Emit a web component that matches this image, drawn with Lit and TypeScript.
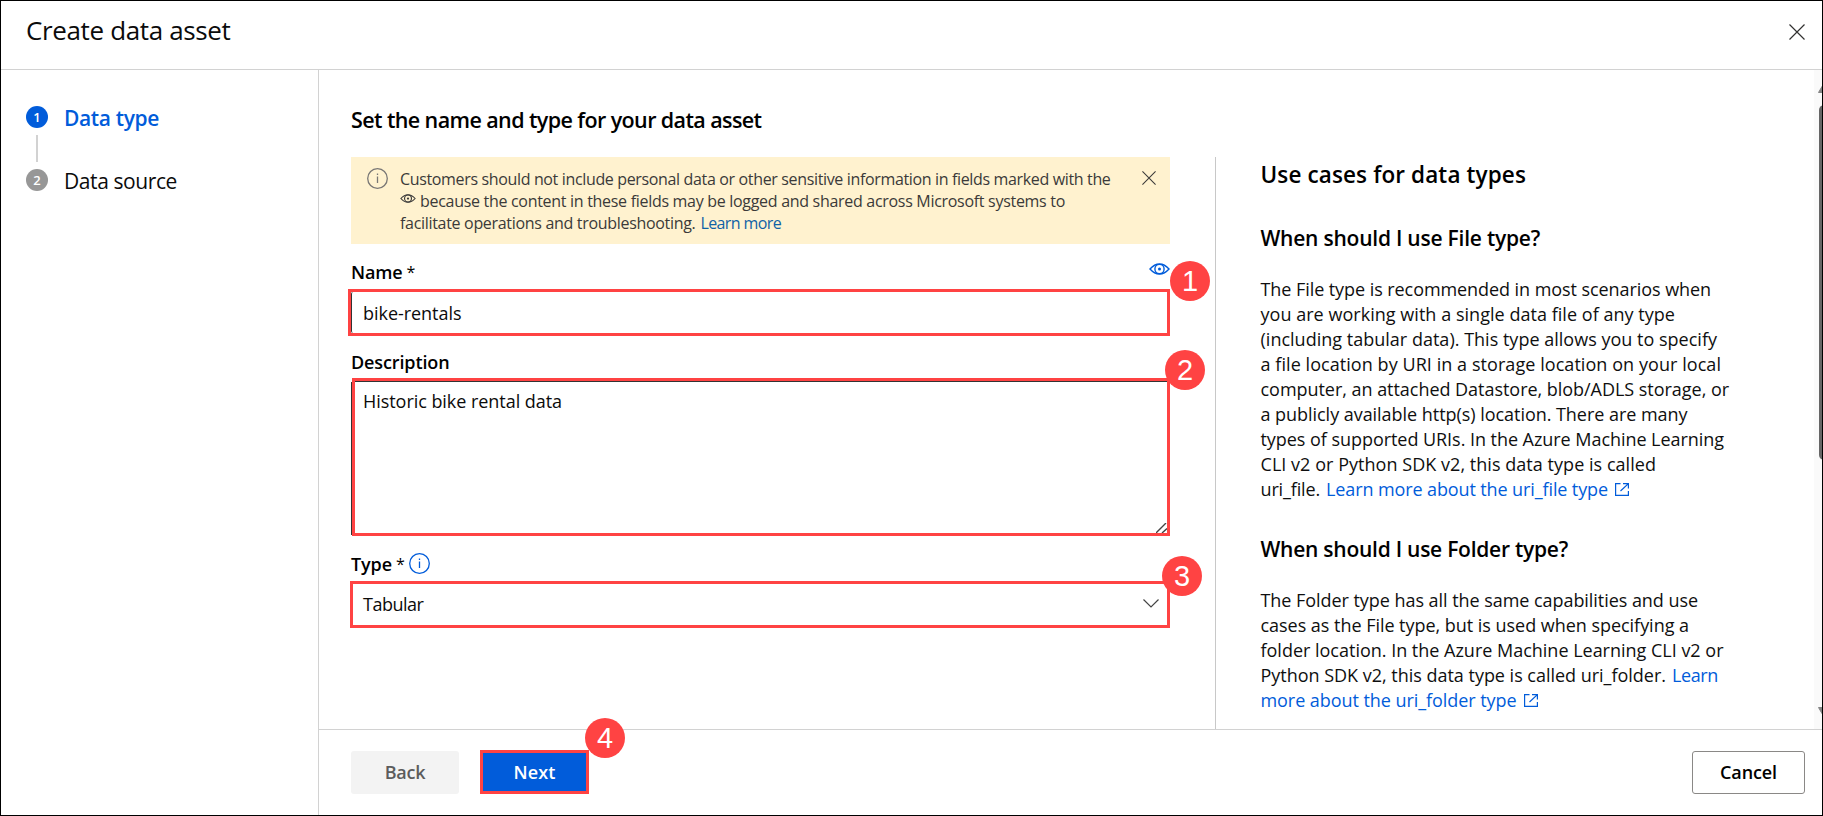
import { LitElement, html, css } from "lit";
import { customElement, property } from "lit/decorators.js";

/** One unbroken run of text, tracked so that it takes up exactly `w` pixels. */
@customElement("fit-text")
class FitText extends LitElement {
  static styles = css`
    :host { display: inline-block; white-space: pre; }
  `;
  @property({ type: Number }) w = 0;
  @property() text = "";
  render() {
    return html`<span>${this.text}</span>`;
  }
  updated() {
    const span = this.renderRoot.querySelector("span") as HTMLElement;
    span.style.letterSpacing = "0px";
    const natural = span.getBoundingClientRect().width;
    if (this.w) span.style.letterSpacing = `${(this.w - natural) / this.text.length}px`;
  }
}

const fit = (text: string, w: number) => html`<fit-text .text=${text} .w=${w}></fit-text>`;

const eye = (cls: string, sw: number) => html`
  <svg class=${cls} viewBox="0 0 21 12" fill="none" stroke="currentColor" stroke-width=${sw}>
    <path d="M1 6C4 2.600 7 1 10.500 1S17 2.600 20 6C17 9.400 14 11 10.500 11S4 9.400 1 6Z" />
    <circle cx="10.500" cy="6" r="4.600" />
    <circle cx="10.500" cy="6" r="1.500" fill="currentColor" stroke="none" />
  </svg>`;

const info = html`
  <svg class="info" viewBox="0 0 21 21" fill="none" stroke="currentColor">
    <circle cx="10.500" cy="10.500" r="9.800" stroke-width="1.300" />
    <path d="M10.500 8.500V15M10.500 5.500V7" stroke-width="1.300" />
  </svg>`;

const cross = (cls: string) => html`
  <svg class=${cls} viewBox="0 0 16 16" fill="none" stroke="currentColor" stroke-width="1.200">
    <path d="M.5 .5L15.500 15.500M15.500 .5L.5 15.500" />
  </svg>`;

const external = html`
  <svg class="ext" viewBox="0 0 14 13" fill="none" stroke="currentColor" stroke-width="1.200">
    <path d="M5.500 .6H.6V12.400H13.400V8M8 .6H13.400V5.500M13.400 .6L5.500 8" />
  </svg>`;

const fileLines: [string, number][] = [
  ["The File type is recommended in most scenarios when", 450.5],
  ["you are working with a single data file of any type", 414.5],
  ["(including tabular data). This type allows you to specify", 456.5],
  ["a file location by URI in a storage location on your local", 460.5],
  ["computer, an attached Datastore, blob/ADLS storage, or", 468.5],
  ["a publicly available http(s) location. There are many", 427],
  ["types of supported URIs. In the Azure Machine Learning", 463.5],
  ["CLI v2 or Python SDK v2, this data type is called", 395.5],
];
const folderLines: [string, number][] = [
  ["The Folder type has all the same capabilities and use", 437.5],
  ["cases as the File type, but is used when specifying a", 428.5],
  ["folder location. In the Azure Machine Learning CLI v2 or", 463],
];

@customElement("app-root")
class AppRoot extends LitElement {
  static styles = css`
    :host { display: block; font: 18px "Open Sans", "Noto Sans", sans-serif; color: #0b0b0b; }
    * { box-sizing: border-box; }
    svg { display: block; flex: none; overflow: visible; }
    .dialog { width: 1823px; height: 816px; border: 1px solid #000; background: #fff; display: flex; flex-direction: column; overflow: hidden; }
    header { height: 69px; flex: none; border-bottom: 1px solid #d2d2d2; display: flex; justify-content: space-between; padding: 0 17px 0 25px; }
    .title { font-size: 26px; line-height: 59px; }
    .close { width: 16px; height: 16px; margin-top: 23px; color: #323130; }
    .body { flex: 1; display: flex; min-height: 0; }
    nav { width: 318px; flex: none; border-right: 1px solid #d2d2d2; padding: 36px 0 0 25px; }
    .step { display: flex; height: 22px; gap: 16px; align-items: flex-start; font-size: 21px; line-height: 25px; }
    .step .num { width: 22px; height: 22px; border-radius: 50%; background: #979797; color: #fff; font-size: 13px; font-weight: 600; line-height: 23px; text-align: center; }
    .step.active { color: #015cda; font-weight: 600; }
    .step.active .num { background: #015cda; }
    .link-bar { width: 2px; height: 27px; background: #d2d2d2; margin: 7px 10px; }
    main { flex: 1; display: flex; flex-direction: column; min-width: 0; }
    .content { height: 660px; border-bottom: 1px solid #d2d2d2; display: flex; padding-left: 32px; }
    .form { width: 819px; flex: none; }
    h1, h2, h3 { margin: 0; font-weight: 600; color: #000; }
    h1 { font-size: 21.5px; line-height: 40px; padding: 30px 0 17px; }
    .banner { height: 87px; background: #fff2cf; display: flex; padding: 11px 14px 0 16px; color: #3b3a39; }
    .banner .info { color: #797775; }
    .info { width: 21px; height: 21px; }
    .banner .msg { flex: 1; margin-left: 12px; font-size: 16px; line-height: 22px; white-space: nowrap; }
    .msg div { height: 22px; display: flex; }
    .eye-s { width: 16px; height: 9px; margin: 4px 4px 0 0; }
    .eye-l { width: 21px; height: 12px; margin-top: -7px; color: #015cda; }
    .msg .more { color: #0f62a6; margin-left: 5px; }
    .x-s { width: 14px; height: 14px; margin-top: 3px; }
    .label { display: flex; align-items: center; font-weight: 600; color: #000; height: 45px; padding-top: 11px; }
    .label .star { margin-left: 4px; width: 8px; font-size: 16px; line-height: 24px; font-weight: 400; }
    .label .grow { flex: 1; }
    .label.desc { height: 42px; padding-top: 10px; }
    .label .info { color: #015cda; margin-left: 5px; margin-top: -2px; }
    .box { position: relative; height: 47px; border: 3px solid #ff4343; display: flex; align-items: center; justify-content: space-between; padding-right: 10px; }
    .box.name { margin-left: -3px; }
    .box.name .inner { border-left: 1px solid #333; border-radius: 2px; height: 41px; padding-left: 11px; line-height: 42px; }
    .box.area { height: 158px; margin-left: 1px; align-items: stretch; padding: 0; }
    .box.area::before { content: ""; position: absolute; left: -4px; top: 1px; bottom: -2px; width: 1px; background: #333; }
    .box.area .inner { flex: 1; display: flex; justify-content: space-between; border-top: 1px solid #333; padding: 7px 0 0 8px; line-height: 25px; }
    .box.select { margin-left: -1px; padding-left: 10px; }
    .box.select fit-text { margin-top: -1px; }
    .grip { width: 11px; height: 10px; align-self: flex-end; color: #444; overflow: hidden; }
    .chev { width: 16px; height: 9px; margin: -2px -2px 0 0; color: #444; }
    .badge { position: absolute; width: 40px; height: 40px; border-radius: 50%; background: #ff4343; color: #fff; font: 29px/41px "Liberation Sans", Arial, sans-serif; text-align: center; }
    .b1 { right: -43px; top: -31px; }
    .b2 { right: -38px; top: -31px; }
    .b3 { right: -35px; top: -28px; }
    .b4 { right: -39px; top: -35px; }
    aside { flex: 1; margin: 87px 0 0 45px; border-left: 1px solid #c8c8c8; padding-left: 44.5px; }
    h2 { font-size: 22.5px; line-height: 34px; padding-top: 1px; }
    h3 { font-size: 21px; line-height: 30px; margin: 31px 0 24px; }
    .para + h3 { margin-top: 32px; }
    .para { line-height: 25px; color: #0f0f0f; }
    .para div { height: 25px; display: flex; white-space: nowrap; }
    .para a { color: #015cda; display: flex; }
    .para a.after { margin-left: 6px; }
    .ext { width: 14px; height: 13px; margin: 6px 0 0 7px; }
    .scroll { width: 8px; background: #fafafa; }
    .scroll svg { width: 8px; height: 659px; overflow: hidden; }
    footer { flex: 1; display: flex; align-items: flex-start; padding: 21px 17px 0 32px; font-weight: 600; }
    .btn { height: 43px; width: 108px; border-radius: 3px; display: flex; align-items: center; justify-content: center; padding-bottom: 2px; }
    .back { background: #f3f3f3; color: #5c5c5c; }
    .next { position: relative; width: 109px; height: 44px; margin: -1px auto 0 21px; padding-bottom: 0; border: 3px solid #ff4343; border-radius: 0; background: #015cda; color: #fff; }
    .cancel { width: 113px; border: 1px solid #8a8886; color: #000; }
  `;

  render() {
    return html`
      <div class="dialog">
        <header>
          <div class="title">${fit("Create data asset", 204.5)}</div>
          ${cross("close")}
        </header>
        <div class="body">
          <nav>
            <div class="step active"><div class="num">1</div>${fit("Data type", 95)}</div>
            <div class="link-bar"></div>
            <div class="step"><div class="num">2</div>${fit("Data source", 113)}</div>
          </nav>
          <main>
            <div class="content">
              <div class="form">
                <h1>${fit("Set the name and type for your data asset", 410.5)}</h1>
                <div class="banner">
                  ${info}
                  <div class="msg">
                    <div>${fit("Customers should not include personal data or other sensitive information in fields marked with the", 710.5)}</div>
                    <div>${eye("eye-s", 1.5)}${fit("because the content in these fields may be logged and shared across Microsoft systems to", 645)}</div>
                    <div>${fit("facilitate operations and troubleshooting.", 295.5)}<a class="more">${fit("Learn more", 80.5)}</a></div>
                  </div>
                  ${cross("x-s")}
                </div>
                <div class="label">${fit("Name", 51.5)}<span class="star">*</span><span class="grow"></span>${eye("eye-l", 1.4)}</div>
                <div class="box name"><div class="inner">${fit("bike-rentals", 98.5)}</div><div class="badge b1">1</div></div>
                <div class="label desc">${fit("Description", 98.5)}</div>
                <div class="box area">
                  <div class="inner">
                    ${fit("Historic bike rental data", 199)}
                    <svg class="grip" viewBox="0 0 11 10" fill="none" stroke="currentColor" stroke-width="1.400"><path d="M0 10L10 0M6 10L11 5.500" /></svg>
                  </div>
                  <div class="badge b2">2</div>
                </div>
                <div class="label">${fit("Type", 41)}<span class="star">*</span>${info}</div>
                <div class="box select">
                  ${fit("Tabular", 60.5)}
                  <svg class="chev" viewBox="0 0 16 9" fill="none" stroke="currentColor" stroke-width="1.200"><path d="M.5 .5L8 8L15.500 .5" /></svg>
                  <div class="badge b3">3</div>
                </div>
              </div>
              <aside>
                <h2>${fit("Use cases for data types", 265.5)}</h2>
                <h3>${fit("When should I use File type?", 279.5)}</h3>
                <div class="para">
                  ${fileLines.map(([t, w]) => html`<div>${fit(t, w)}</div>`)}
                  <div>${fit("uri_file.", 59.5)}<a class="after">${fit("Learn more about the uri_file type", 282)}${external}</a></div>
                </div>
                <h3>${fit("When should I use Folder type?", 307.5)}</h3>
                <div class="para">
                  ${folderLines.map(([t, w]) => html`<div>${fit(t, w)}</div>`)}
                  <div>${fit("Python SDK v2, this data type is called uri_folder.", 405.5)}<a class="after">${fit("Learn", 46)}</a></div>
                  <div><a>${fit("more about the uri_folder type", 256)}${external}</a></div>
                </div>
              </aside>
              <div class="scroll">
                <svg viewBox="0 0 8 659">
                  <path d="M4.500 22.500L8 16.500L12 22.500Z" fill="#858585" stroke="#858585" />
                  <rect x="5" y="35" width="10" height="355" rx="5" fill="#666" />
                  <path d="M4.500 637.500H12L8 643.500Z" fill="#858585" stroke="#858585" />
                </svg>
              </div>
            </div>
            <footer>
              <div class="btn back">${fit("Back", 40.5)}</div>
              <div class="btn next">${fit("Next", 42)}<div class="badge b4">4</div></div>
              <div class="btn cancel">${fit("Cancel", 57)}</div>
            </footer>
          </main>
        </div>
      </div>
    `;
  }
}
